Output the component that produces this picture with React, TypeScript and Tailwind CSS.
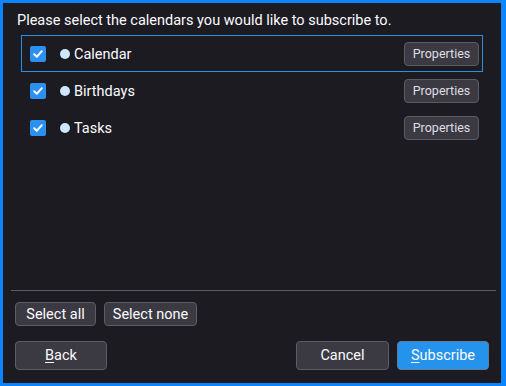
import React from "react";

const font = { fontFamily: 'Roboto, "Noto Sans", sans-serif' };

function Check() {
  return (
    <div className="w-4 h-4 rounded-[2px] bg-[#2b90f0] flex items-center justify-center shrink-0">
      <svg width="12" height="12" viewBox="0 0 12 12" fill="none">
        <path d="M2.2 6.3 L4.8 8.8 L9.8 3.2" stroke="white" strokeWidth="2" strokeLinecap="round" strokeLinejoin="round" />
      </svg>
    </div>
  );
}

function Row({ name, selected }: { name: string; selected?: boolean }) {
  return (
    <div
      className={
        "h-[37px] flex items-center pl-[8px] pr-[3px] border " +
        (selected ? "border-[#2e8ee0]" : "border-transparent")
      }
    >
      <Check />
      <div className="w-[10px] h-[10px] rounded-full bg-[#cfe6ff] ml-[14px] shrink-0" />
      <span className="ml-[4px] pt-[2px] text-[14.5px] leading-[20px] text-[#fbfbfe]">{name}</span>
      <div className="flex-1" />
      <button className="w-[75px] h-[24px] pt-[1px] rounded-[4px] bg-[#3b3a43] border border-[#5d5c64] text-[12.5px] leading-[18px] text-[#dedee4] flex items-center justify-center">
        Properties
      </button>
    </div>
  );
}

const btn =
  "rounded-[4px] bg-[#3b3a43] border border-[#5d5c64] text-[14.5px] leading-[20px] pt-[1px] flex items-center justify-center";

export default function App() {
  return (
    <div
      style={font}
      className="w-[506px] h-[386px] bg-[#1c1b22] border-l-[3px] border-t-[3px] border-r-[5px] border-b-[3px] border-[#0a84ff] flex flex-col text-[#fbfbfe]"
    >
      <div className="pt-[8px] pl-[14px] text-[14.5px] leading-[20px]">
        Please select the calendars you would like to subscribe to.
      </div>
      <div className="mt-[4px] ml-[18px] w-[462px] flex flex-col">
        <Row name="Calendar" selected />
        <Row name="Birthdays" />
        <Row name="Tasks" />
      </div>
      <div className="flex-1" />
      <div className="ml-[8px] mr-[5px] h-px bg-[#5b5a61]" />
      <div className="mt-[11px] ml-[12px] flex gap-[8px]">
        <button className={"w-[81px] h-[24px] " + btn}>Select all</button>
        <button className={"w-[93px] h-[24px] " + btn}>Select none</button>
      </div>
      <div className="mt-[15px] mb-[13px] mx-[12px] flex items-center">
        <button className={"w-[92px] h-[29px] " + btn}>
          <span><span className="underline underline-offset-2">B</span>ack</span>
        </button>
        <div className="flex-1" />
        <button className={"w-[93px] h-[29px] " + btn}>Cancel</button>
        <button className="ml-[8px] w-[92px] h-[29px] pt-[1px] rounded-[4px] bg-[#2593eb] border border-[#5d7d9c] text-[14.5px] leading-[20px] flex items-center justify-center">
          <span><span className="underline underline-offset-2">S</span>ubscribe</span>
        </button>
      </div>
    </div>
  );
}
